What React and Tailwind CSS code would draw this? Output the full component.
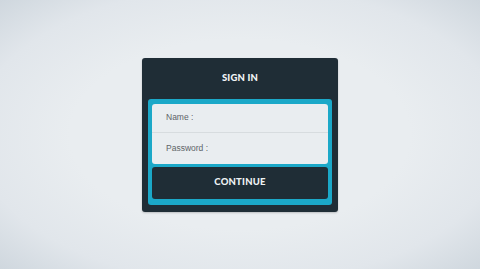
export default function App() {
	return (
		<main className="w-[480px] h-[269px] flex items-center justify-center bg-[radial-gradient(ellipse_at_center,#e9edf0_50%,#e1e6eb_78%,#cfd7de_100%)]">
			<div className="w-[196px] h-[154px] flex flex-col bg-[#1f2d36] rounded-[3px] shadow-[0_1px_2px_rgba(0,0,0,0.2)]">
				<div className="h-[41px] flex items-center justify-center text-[9.5px] font-black text-[#f2f5f7] tracking-[0.2px] font-['Lato','Open_Sans',sans-serif]">
					SIGN IN
				</div>
				<div className="mx-[6px] h-[106px] flex flex-col gap-[3px] pt-[5px] px-[4px] pb-[6px] bg-[#1ba8c8] rounded-[3px]">
					<div className="h-[60px] flex flex-col bg-[#e9edf0] rounded-[3px] font-['Liberation_Sans',Arial,sans-serif] text-[8.5px] text-[#5e6468]">
						<div className="h-[29px] flex items-center pl-[14px] border-b border-[#d7dcdf]">
							Name :
						</div>
						<div className="flex-1 flex items-center pl-[14px]">
							Password :
						</div>
					</div>
					<button className="h-[32px] flex items-center justify-center bg-[#1f2d36] rounded-[3px] text-[9.5px] font-black text-[#eef2f4] tracking-[0.2px] font-['Lato','Open_Sans',sans-serif]">
						CONTINUE
					</button>
				</div>
			</div>
		</main>
	);
}
